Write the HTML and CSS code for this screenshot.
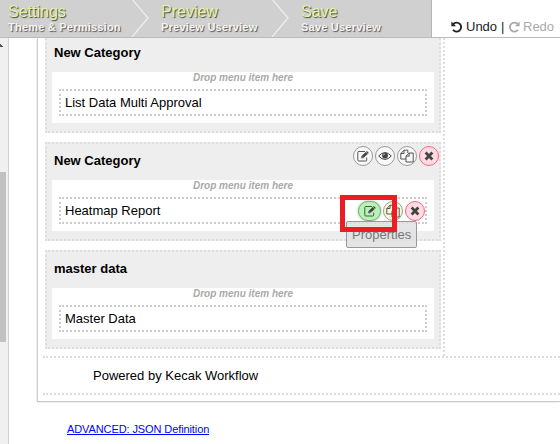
FILE: index.html
```html
<!DOCTYPE html>
<html lang="en">
<head>
<meta charset="utf-8">
<title>Userview Builder</title>
<link rel="stylesheet" href="styles.css">
</head>
<body>
<svg class="defs" width="0" height="0">
  <symbol id="edit" viewBox="0 0 14 14"><path d="M9 2.5H2.8Q1.8 2.5 1.8 3.5V11Q1.8 12 2.8 12H9.7Q10.7 12 10.7 11V8.5" fill="none" stroke="currentColor" stroke-width=".9"/><path d="M5.3 9.3V7.3L10.8 2 12.8 3.9 7.2 9.3Z" fill="currentColor"/><path d="M6 7.5 7.2 8.7M9.9 3.1 11.7 4.8" stroke="#eee" stroke-width=".6"/></symbol>
  <symbol id="eye" viewBox="0 0 14 14"><path d="M.7 7Q7 .1 13.3 7 7 13.9.7 7Z" fill="none" stroke="currentColor" stroke-width="1"/><circle cx="7" cy="6.6" r="2.9" fill="currentColor"/><path d="M5.4 6.3Q5.5 5 6.9 4.9" fill="none" stroke="#fff" stroke-width=".7"/></symbol>
  <symbol id="copy" viewBox="0 0 14 14"><path d="M6 10H.8V4.5L4 1.2H7.8V4M4 1.2V4.5H.8M6 7.2 9.2 4H13.2V13H6ZM9.2 4V7.2H6" fill="none" stroke="currentColor" stroke-width=".9"/></symbol>
  <symbol id="cross" viewBox="0 0 14 14"><path d="M3.6 3.6 10.4 10.4M10.4 3.6 3.6 10.4" stroke="currentColor" stroke-width="2.8"/></symbol>
  <symbol id="undo" viewBox="0 0 12 12"><path d="M2.2 3.2A4.5 4.5 0 1 1 2 8.8" fill="none" stroke="currentColor" stroke-width="1.9"/><path d="M.4.6V5.2H5Z" fill="currentColor"/></symbol>
</svg>
<header class="topbar">
  <nav class="steps">
    <div class="step"><div class="title">Settings</div><div class="sub">Theme &amp; Permission</div><svg class="chevron" viewBox="0 0 20 37"><path d="M2-1 18 18 2 37"/></svg></div>
    <div class="step"><div class="title">Preview</div><div class="sub">Preview Userview</div><svg class="chevron" viewBox="0 0 20 37"><path d="M2-1 18 18 2 37"/></svg></div>
    <div class="step"><div class="title">Save</div><div class="sub">Save Userview</div></div>
  </nav>
  <div class="history"><svg><use href="#undo"/></svg><span class="undo">Undo</span><span class="bar">|</span><svg class="flip"><use href="#undo"/></svg><span class="redo">Redo</span></div>
</header>
<div class="body">
  <div class="scroll"><div class="arrow"></div><div class="thumb"></div></div>
  <main>
    <div class="canvas">
      <div class="menu-column">
        <section class="category">
          <h2>New Category</h2>
          <div class="drop"><p>Drop menu item here</p><div class="item">List Data Multi Approval</div></div>
        </section>
        <section class="category">
          <h2>New Category</h2>
          <div class="tools top"><i><svg><use href="#edit"/></svg></i><i><svg><use href="#eye"/></svg></i><i><svg><use href="#copy"/></svg></i><i class="red"><svg><use href="#cross"/></svg></i></div>
          <div class="drop"><p>Drop menu item here</p><div class="item">Heatmap Report
            <div class="tools row"><i class="green"><svg><use href="#edit"/></svg></i><i class="yellow"><svg><use href="#copy"/></svg></i><i class="red"><svg><use href="#cross"/></svg></i></div>
            <div class="tooltip">Properties</div><div class="highlight"></div></div></div>
        </section>
        <section class="category">
          <h2>master data</h2>
          <div class="drop"><p>Drop menu item here</p><div class="item">Master Data</div></div>
        </section>
      </div>
      <footer>Powered by Kecak Workflow</footer>
    </div>
    <a class="advanced" href="#">ADVANCED: JSON Definition</a>
  </main>
</div>
</body>
</html>
```
FILE: styles.css
```css
* { box-sizing: border-box; }
body { margin: 0; width: 560px; height: 444px; overflow: hidden; background: #fff; color: #000; font: 13px/16px "Liberation Sans", Arial, sans-serif; }
.defs { position: absolute; }
.topbar { display: flex; height: 38px; border-bottom: 1px solid #bbb; }
.steps { display: flex; flex: none; width: 432px; background: #d0d0d0; border-right: 1px solid #b5b5b5; }
.step { position: relative; flex: none; width: 153px; padding: 2px 0 0 8px; white-space: nowrap; }
.step:nth-child(2) { width: 140px; }
.step:nth-child(3) { width: 138px; }
.title { font-size: 16px; line-height: 19px; color: #e2f5a3; text-shadow: 1px 1px 1px #444; }
.sub { font-size: 11px; font-weight: bold; line-height: 13px; letter-spacing: .22px; color: #f4f4f4; text-shadow: 1px 1px 1px #555; }
.chevron { position: absolute; top: 0; right: 3px; width: 20px; height: 37px; fill: none; stroke: #eee; stroke-width: 1.3; }
.history { display: flex; padding: 19px 0 0 19px; white-space: nowrap; color: #222; }
.history svg { flex: none; width: 12px; height: 12px; margin-top: 2px; }
.undo { width: 31px; margin: 0 4px 0 3px; }
.bar { width: 4px; margin-right: 3px; }
.history .flip { transform: scaleX(-1); color: #aaa; }
.redo { margin-left: 3px; color: #aaa; }
.body { display: flex; height: 406px; }
.scroll { flex: none; width: 9px; background: #f0f0f0; border-right: 1px solid #d2d2d2; }
.arrow { width: 3px; height: 3px; margin-top: 6px; background: linear-gradient(45deg, #555 50%, transparent 50%); }
.thumb { width: 6px; height: 170px; margin-top: 125px; background: #c1c1c1; }
main { flex: 1; padding-left: 28px; }
.canvas { height: 364px; padding-left: 5px; border-left: 1px solid #ccc; border-bottom: 1px solid #ccc; box-shadow: -1px 1px 0 #eee; }
.menu-column { width: 402px; height: 318px; padding-left: 2px; border-right: 2px dotted #ddd; overflow: hidden; }
.category { position: relative; width: 396px; height: 99px; margin-bottom: 9px; padding: 9px 5px 0; border: 2px dotted #ddd; background: #eee; }
.category:first-child { height: 95px; padding-top: 7px; border-top: 0; }
h2 { height: 27px; margin: 0; padding-left: 2px; font-size: 13px; line-height: 16px; }
.drop { height: 51px; padding: 0 7px; background: #fff; }
.drop p { height: 17px; margin: 0; line-height: 12px; text-align: center; font-size: 10px; font-style: italic; font-weight: bold; color: #aaa; }
.item { position: relative; height: 27px; padding: 4px 0 0 4px; border: 2px dotted #ccc; }
.tools { position: absolute; display: flex; gap: 2px; color: #444; }
.tools.top { top: 2px; right: 0; }
.tools.row { top: 2px; right: 0; }
.tools i { display: flex; align-items: center; justify-content: center; width: 20px; height: 20px; border: 1px solid #999; border-radius: 10px; background: #f8f8f8; }
.tools svg { width: 14px; height: 14px; }
.tools .red { border-color: #ff6383; background: #ffdce2; }
.tools .green { width: 23px; background: #b5f5b2; box-shadow: 0 0 3px #74d474; }
.tools .yellow { background: #fafad9; }
.tooltip { position: absolute; left: 285px; top: 22px; width: 71px; height: 27px; padding: 4px 0 0 5px; border: 1px solid #999; border-radius: 2px; background: rgba(225,225,225,.85); color: #777; font-size: 13px; line-height: 18px; }
.highlight { position: absolute; left: 279px; top: -4px; width: 57px; height: 37px; border: 5px solid #ed1c24; }
footer { height: 39px; padding: 10px 0 0 50px; border: 2px dotted #ddd; border-left: 0; border-right: 0; }
.advanced { display: block; width: 143px; margin: 20px 0 0 30px; font-size: 11px; line-height: 14px; letter-spacing: -.1px; white-space: nowrap; color: #00f; }
```
